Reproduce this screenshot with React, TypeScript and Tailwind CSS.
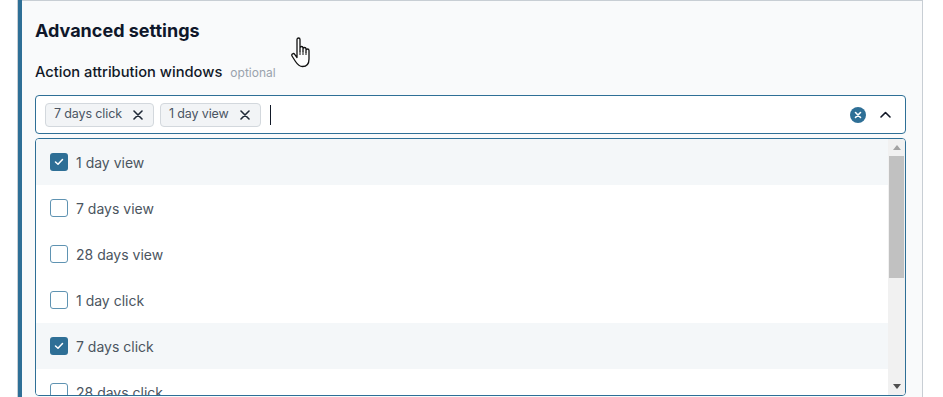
import React from "react";

const options = [
  { label: "1 day view", checked: true },
  { label: "7 days view", checked: false },
  { label: "28 days view", checked: false },
  { label: "1 day click", checked: false },
  { label: "7 days click", checked: true },
  { label: "28 days click", checked: false },
];

function XIcon() {
  return (
    <svg width="10" height="10" viewBox="0 0 10 10" fill="none">
      <path d="M1 1L9 9M9 1L1 9" stroke="#1f2937" strokeWidth="1.6" strokeLinecap="round" />
    </svg>
  );
}

function Chip({ label }: { label: string }) {
  return (
    <div className="flex h-[24px] items-center rounded-[4px] border border-[#d3d8dd] bg-[#f2f4f6] pl-[8px] pr-[10px]">
      <span className="text-[12.5px] tracking-[-0.01em] text-[#4b5563]">{label}</span>
      <span className="ml-[11px] flex items-center">
        <XIcon />
      </span>
    </div>
  );
}

function Checkbox({ checked }: { checked: boolean }) {
  if (checked) {
    return (
      <div className="flex h-[18px] w-[18px] items-center justify-center rounded-[3px] bg-[#2e6f96]">
        <svg width="10" height="8" viewBox="0 0 10 8" fill="none">
          <path d="M1.5 4L4 6.3L8.5 1.5" stroke="white" strokeWidth="1.5" strokeLinecap="round" strokeLinejoin="round" />
        </svg>
      </div>
    );
  }
  return <div className="h-[18px] w-[18px] rounded-[3px] border-[1.5px] border-[#5f93b2] bg-white" />;
}

export default function App() {
  return (
    <div
      className="relative h-[397px] w-[943px] overflow-hidden bg-white"
      style={{ fontFamily: "Inter, 'Noto Sans', sans-serif" }}
    >
      <div className="ml-[17px] flex h-full w-[906px] border-l border-[#c8ced4]">
        <div className="h-full w-[4px] bg-[#2e6f96]" />
        <div className="h-full flex-1 border-r border-t border-[#c8ced4] bg-[#f9fafb] pl-[13px] pr-[16px] pt-[18px]">
          <h2 className="text-[18px] font-bold leading-[24px] text-[#0f172a]">Advanced settings</h2>
          <div className="mt-[19px] flex items-baseline gap-[8px]">
            <span className="text-[14.7px] font-medium leading-[20px] text-[#111827]">Action attribution windows</span>
            <span className="text-[12px] text-[#9aa3ad]">optional</span>
          </div>
          <div className="mt-[13px] flex h-[39px] items-center rounded-[4px] border border-[#2e6f96] bg-white pl-[9px] pr-[14px]">
            <div className="flex items-center gap-[6px]">
              <Chip label="7 days click" />
              <Chip label="1 day view" />
            </div>
            <div className="ml-[9px] h-[20px] w-[1px] bg-[#111827]" />
            <div className="flex-1" />
            <div className="flex h-[16px] w-[16px] items-center justify-center rounded-full bg-[#2e6f96]">
              <svg width="8" height="8" viewBox="0 0 8 8" fill="none">
                <path d="M1.5 1.5L6.5 6.5M6.5 1.5L1.5 6.5" stroke="white" strokeWidth="1.6" strokeLinecap="round" />
              </svg>
            </div>
            <div className="ml-[14px] flex items-center">
              <svg width="11" height="7" viewBox="0 0 11 7" fill="none">
                <path d="M1 6L5.5 1.5L10 6" stroke="#111827" strokeWidth="1.6" strokeLinecap="round" strokeLinejoin="round" />
              </svg>
            </div>
          </div>
          <div className="mt-[4px] flex h-[258px] overflow-hidden rounded-[4px] border border-[#2e6f96] bg-white">
            <div className="flex-1 overflow-hidden">
              {options.map((o) => (
                <div
                  key={o.label}
                  className={`flex h-[46px] items-center gap-[8px] pl-[14px] ${o.checked ? "bg-[#f4f7f9]" : "bg-white"}`}
                >
                  <Checkbox checked={o.checked} />
                  <span className="text-[14px] text-[#4b5560]">{o.label}</span>
                </div>
              ))}
            </div>
            <div className="flex w-[17px] flex-col items-center bg-[#f1f1f1]">
              <div className="flex h-[17px] items-center justify-center">
                <svg width="8" height="5" viewBox="0 0 8 5">
                  <path d="M0 5L4 0L8 5Z" fill="#a3a3a3" />
                </svg>
              </div>
              <div className="h-[122px] w-[15px] bg-[#c1c1c1]" />
              <div className="flex-1" />
              <div className="flex h-[17px] items-center justify-center">
                <svg width="8" height="5" viewBox="0 0 8 5">
                  <path d="M0 0L4 5L8 0Z" fill="#505050" />
                </svg>
              </div>
            </div>
          </div>
        </div>
      </div>
      <svg className="absolute left-[290px] top-[37px]" width="26" height="34" viewBox="0 0 26 34" fill="none">
        <path
          d="M7 2.5C7 1.7 7.7 1 8.5 1C9.3 1 10 1.7 10 2.5V14V11C10 10.2 10.7 9.5 11.5 9.5C12.3 9.5 13 10.2 13 11V14V12C13 11.2 13.7 10.5 14.5 10.5C15.3 10.5 16 11.2 16 12V15V13.5C16 12.7 16.7 12 17.5 12C18.3 12 19 12.7 19 13.5V22C19 26 17 29.5 12.5 29.5C9 29.5 7.5 27.5 5.5 24.5L2 19C1.5 18.2 1.8 17.2 2.6 16.8C3.3 16.4 4.2 16.6 4.7 17.3L7 20.5V2.5Z"
          fill="white"
          stroke="#111"
          strokeWidth="1.3"
          strokeLinejoin="round"
        />
        <path d="M13 14V18M16 15V18M10 14V18" stroke="#111" strokeWidth="1" />
      </svg>
    </div>
  );
}
